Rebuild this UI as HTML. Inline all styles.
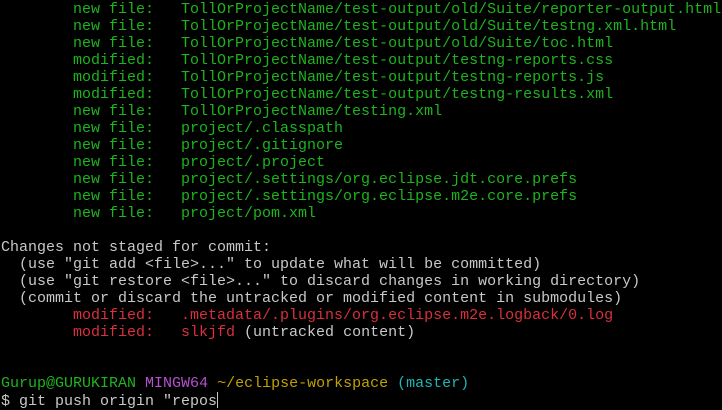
<!DOCTYPE html>
<html><head><style>
body{margin:0;background:#000;width:722px;height:410px;overflow:hidden}
pre{margin:0;padding:1px 0 0 1px;font-family:"Liberation Mono",monospace;font-size:15px;line-height:17px;color:#c8c8c8;letter-spacing:0}
.g{color:#1db41d}.r{color:#d8303c}.p{color:#b550d0}.y{color:#bfa200}.c{color:#1fb4b4}
.cur{display:inline-block;width:1px;height:16px;background:#c8c8c8;vertical-align:-3px}
</style></head><body><pre><span class="g">        new file:   TollOrProjectName/test-output/old/Suite/reporter-output.html
        new file:   TollOrProjectName/test-output/old/Suite/testng.xml.html
        new file:   TollOrProjectName/test-output/old/Suite/toc.html
        modified:   TollOrProjectName/test-output/testng-reports.css
        modified:   TollOrProjectName/test-output/testng-reports.js
        modified:   TollOrProjectName/test-output/testng-results.xml
        new file:   TollOrProjectName/testing.xml
        new file:   project/.classpath
        new file:   project/.gitignore
        new file:   project/.project
        new file:   project/.settings/org.eclipse.jdt.core.prefs
        new file:   project/.settings/org.eclipse.m2e.core.prefs
        new file:   project/pom.xml</span>

Changes not staged for commit:
  (use "git add &lt;file&gt;..." to update what will be committed)
  (use "git restore &lt;file&gt;..." to discard changes in working directory)
  (commit or discard the untracked or modified content in submodules)
<span class="r">        modified:   .metadata/.plugins/org.eclipse.m2e.logback/0.log</span>
<span class="r">        modified:   slkjfd</span> (untracked content)


<span class="g">Gurup@GURUKIRAN</span> <span class="p">MINGW64</span> <span class="y">~/eclipse-workspace</span> <span class="c">(master)</span>
$ git push origin "repos<span class="cur"></span></pre></body></html>
